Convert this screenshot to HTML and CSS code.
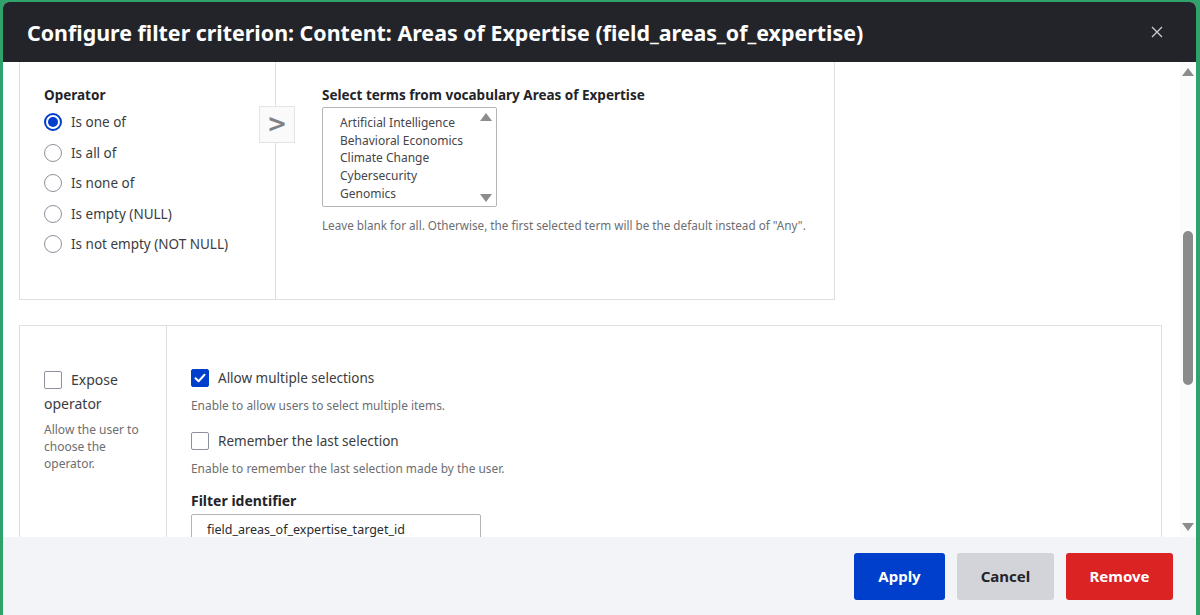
FILE: index.html
```html
<!DOCTYPE html>
<html lang="en">
<head>
<meta charset="utf-8">
<title>Configure filter criterion</title>
<link rel="stylesheet" href="styles.css">
</head>
<body>
<div class="dialog" role="dialog">
  <header class="dialog-head">
    <h1 class="dialog-title">Configure filter criterion: Content: Areas of Expertise (field_areas_of_expertise)</h1>
    <button class="close" aria-label="Close">
      <svg width="12" height="12" viewBox="0 0 12 12"><path d="M1 1L11 11M11 1L1 11" stroke="#c9cacd" stroke-width="1.4" fill="none"/></svg>
    </button>
  </header>

  <div class="dialog-body">
    <div class="scroll-area">
      <div class="scroll-content">
        <fieldset class="box box-operator">
          <div class="col col-ops">
            <div class="field-label">Operator</div>
            <label class="radio-row"><span class="radio checked"></span>Is one of</label>
            <label class="radio-row"><span class="radio"></span>Is all of</label>
            <label class="radio-row"><span class="radio"></span>Is none of</label>
            <label class="radio-row"><span class="radio"></span>Is empty (NULL)</label>
            <label class="radio-row"><span class="radio"></span>Is not empty (NOT NULL)</label>
          </div>
          <button class="toggle" aria-label="Show value">&gt;</button>
          <div class="col col-terms">
            <div class="field-label">Select terms from vocabulary Areas of Expertise</div>
            <div class="listbox">
              <ul class="options">
                <li>Artificial Intelligence</li>
                <li>Behavioral Economics</li>
                <li>Climate Change</li>
                <li>Cybersecurity</li>
                <li>Genomics</li>
              </ul>
              <div class="list-scroll">
                <span class="tri tri-up"></span>
                <span class="tri tri-down"></span>
              </div>
            </div>
            <div class="desc">Leave blank for all. Otherwise, the first selected term will be the default instead of "Any".</div>
          </div>
        </fieldset>

        <fieldset class="box box-expose">
          <div class="col col-expose">
            <label class="check-label"><span class="checkbox"></span>Expose operator</label>
            <div class="desc desc-expose">Allow the user to choose the operator.</div>
          </div>
          <div class="col col-settings">
            <label class="check-row"><span class="checkbox checked"><svg width="12" height="10" viewBox="0 0 12 10"><path d="M1.5 5.2L4.6 8.2L10.5 1.8" stroke="#fff" stroke-width="2" fill="none" stroke-linecap="round" stroke-linejoin="round"/></svg></span>Allow multiple selections</label>
            <div class="desc desc-check">Enable to allow users to select multiple items.</div>
            <label class="check-row"><span class="checkbox"></span>Remember the last selection</label>
            <div class="desc desc-check desc-last">Enable to remember the last selection made by the user.</div>
            <div class="field-label id-label">Filter identifier</div>
            <div class="text-input">field_areas_of_expertise_target_id</div>
          </div>
        </fieldset>
      </div>
    </div>
    <div class="scrollbar">
      <span class="tri tri-up"></span>
      <div class="track"><span class="thumb"></span></div>
      <span class="tri tri-down"></span>
    </div>
  </div>

  <footer class="dialog-foot">
    <button class="btn btn-apply">Apply</button>
    <button class="btn btn-cancel">Cancel</button>
    <button class="btn btn-remove">Remove</button>
  </footer>
</div>
</body>
</html>
```

FILE: styles.css
```css
* { box-sizing: border-box; }

html, body {
  margin: 0;
  height: 100%;
}

body {
  background: #2ea46c;
  font-family: "Noto Sans", "Open Sans", sans-serif;
  color: #232429;
  overflow: hidden;
}

.dialog {
  margin: 2px 4px 0 3px;
  height: 613px;
  background: #fff;
  border-radius: 6px 6px 0 0;
  overflow: hidden;
  display: flex;
  flex-direction: column;
}

/* title bar */
.dialog-head {
  height: 60px;
  flex: none;
  background: #232429;
  display: flex;
  align-items: center;
  justify-content: space-between;
  padding: 0 33px 0 24px;
}

.dialog-title {
  margin: 0;
  color: #fff;
  font-size: 21.4px;
  font-weight: 700;
  white-space: nowrap;
}

.close {
  border: 0;
  background: none;
  padding: 0;
  width: 12px;
  height: 12px;
  display: flex;
}

/* scrolling body */
.dialog-body {
  flex: 1;
  display: flex;
  min-height: 0;
}

.scroll-area {
  flex: 1;
  overflow: hidden;
}

.scroll-content {
  margin-top: -12px;
  padding-left: 16px;
}

.box {
  margin: 0;
  padding: 0;
  border: 1px solid #dedfe4;
  display: flex;
  min-width: 0;
}

.box-operator {
  width: 816px;
  height: 250px;
  position: relative;
}

.box-expose {
  width: 1143px;
  margin-top: 25px;
  height: 240px;
}

.col {
  padding: 34px 24px 0 24px;
}

.col-ops {
  width: 256px;
  border-right: 1px solid #dedfe4;
}

.col-terms {
  padding-left: 46px;
}

.field-label {
  font-size: 13.5px;
  font-weight: 700;
  line-height: 20px;
  height: 20px;
}

.col-ops .field-label {
  margin-bottom: 2px;
}

.radio-row {
  display: flex;
  align-items: center;
  height: 30.5px;
  font-size: 13.5px;
  color: #3b3c40;
}

.radio {
  width: 18px;
  height: 18px;
  border-radius: 50%;
  border: 1px solid #8e929c;
  margin-right: 9px;
  flex: none;
  position: relative;
}

.radio.checked {
  border: 2px solid #003ecc;
}

.radio.checked::after {
  content: "";
  position: absolute;
  left: 2px;
  top: 2px;
  width: 10px;
  height: 10px;
  border-radius: 50%;
  background: #003ecc;
}

.toggle {
  position: absolute;
  left: 239px;
  top: 55px;
  width: 36px;
  height: 37px;
  padding: 0;
  border: 1px solid #e3e4e8;
  background: #fafafa;
  color: #808185;
  font-family: "DejaVu Sans", sans-serif;
  font-size: 24px;
  line-height: 33px;
  font-weight: 700;
}

.listbox {
  margin-top: 2px;
  width: 175px;
  height: 100px;
  border: 1px solid #b4b5b9;
  border-radius: 2px;
  display: flex;
}

.options {
  list-style: none;
  margin: 0;
  padding: 6px 0 0 17px;
  flex: 1;
  font-size: 12px;
  line-height: 17.7px;
  color: #45464a;
}

.list-scroll {
  width: 20px;
  display: flex;
  flex-direction: column;
  justify-content: space-between;
  align-items: center;
  padding: 5px 0 4px;
}

.tri {
  width: 0;
  height: 0;
  border-left: 6px solid transparent;
  border-right: 6px solid transparent;
}

.tri-up { border-bottom: 8px solid #8c8c8c; }
.tri-down { border-top: 8px solid #8c8c8c; }

.desc {
  font-size: 11.7px;
  line-height: 16px;
  color: #6d6e72;
}

.col-terms .desc {
  margin-top: 10px;
}

/* exposed filter box */
.col-expose {
  width: 147px;
  border-right: 1px solid #dedfe4;
  padding-top: 42px;
}

.col-settings {
  padding-top: 42px;
}

.check-label {
  display: block;
  font-size: 14px;
  line-height: 24px;
  color: #3b3c40;
}

.checkbox {
  display: inline-flex;
  align-items: center;
  justify-content: center;
  width: 18px;
  height: 18px;
  border: 1px solid #8e929c;
  border-radius: 2px;
  vertical-align: -4px;
  margin-right: 9px;
  background: #fff;
  flex: none;
}

.checkbox.checked {
  background: #003ecc;
  border-color: #003ecc;
}

.desc-expose {
  margin-top: 5px;
  font-size: 12px;
  line-height: 17px;
}

.check-row {
  display: flex;
  align-items: center;
  height: 20px;
  font-size: 13.5px;
  color: #3b3c40;
}

.desc-check {
  margin-top: 9px;
  margin-bottom: 18px;
  font-size: 11.9px;
}

.desc-check.desc-last {
  margin-top: 9px;
  margin-bottom: 16px;
}

.id-label {
  margin-top: -1px;
  font-size: 14px;
}

.text-input {
  margin-top: 3px;
  width: 290px;
  height: 40px;
  border: 1px solid #b4b5b9;
  border-radius: 2px;
  padding: 6px 0 0 15px;
  font-size: 12.5px;
  color: #2a2b2f;
}

/* scrollbar */
.scrollbar {
  width: 16px;
  flex: none;
  background: #fbfbfb;
  display: flex;
  flex-direction: column;
  align-items: center;
  padding: 6px 0 6px;
}

.track {
  flex: 1;
  width: 10px;
  padding-top: 155px;
}

.thumb {
  display: block;
  width: 10px;
  height: 154px;
  border-radius: 5px;
  background: #8b8b8b;
}

/* button bar */
.dialog-foot {
  height: 78px;
  flex: none;
  background: #f3f4f8;
  display: flex;
  align-items: center;
  justify-content: flex-end;
  gap: 12px;
  padding: 0 23px 0 0;
}

.btn {
  height: 47px;
  border: 0;
  border-radius: 3px;
  font-family: "Noto Sans", sans-serif;
  font-size: 15px;
  font-weight: 700;
  padding: 0;
}

.btn-apply {
  width: 91px;
  background: #003ecc;
  color: #fff;
}

.btn-cancel {
  width: 97px;
  background: #d3d4d9;
  color: #232429;
}

.btn-remove {
  width: 107px;
  background: #dc2323;
  color: #fff;
}
```
